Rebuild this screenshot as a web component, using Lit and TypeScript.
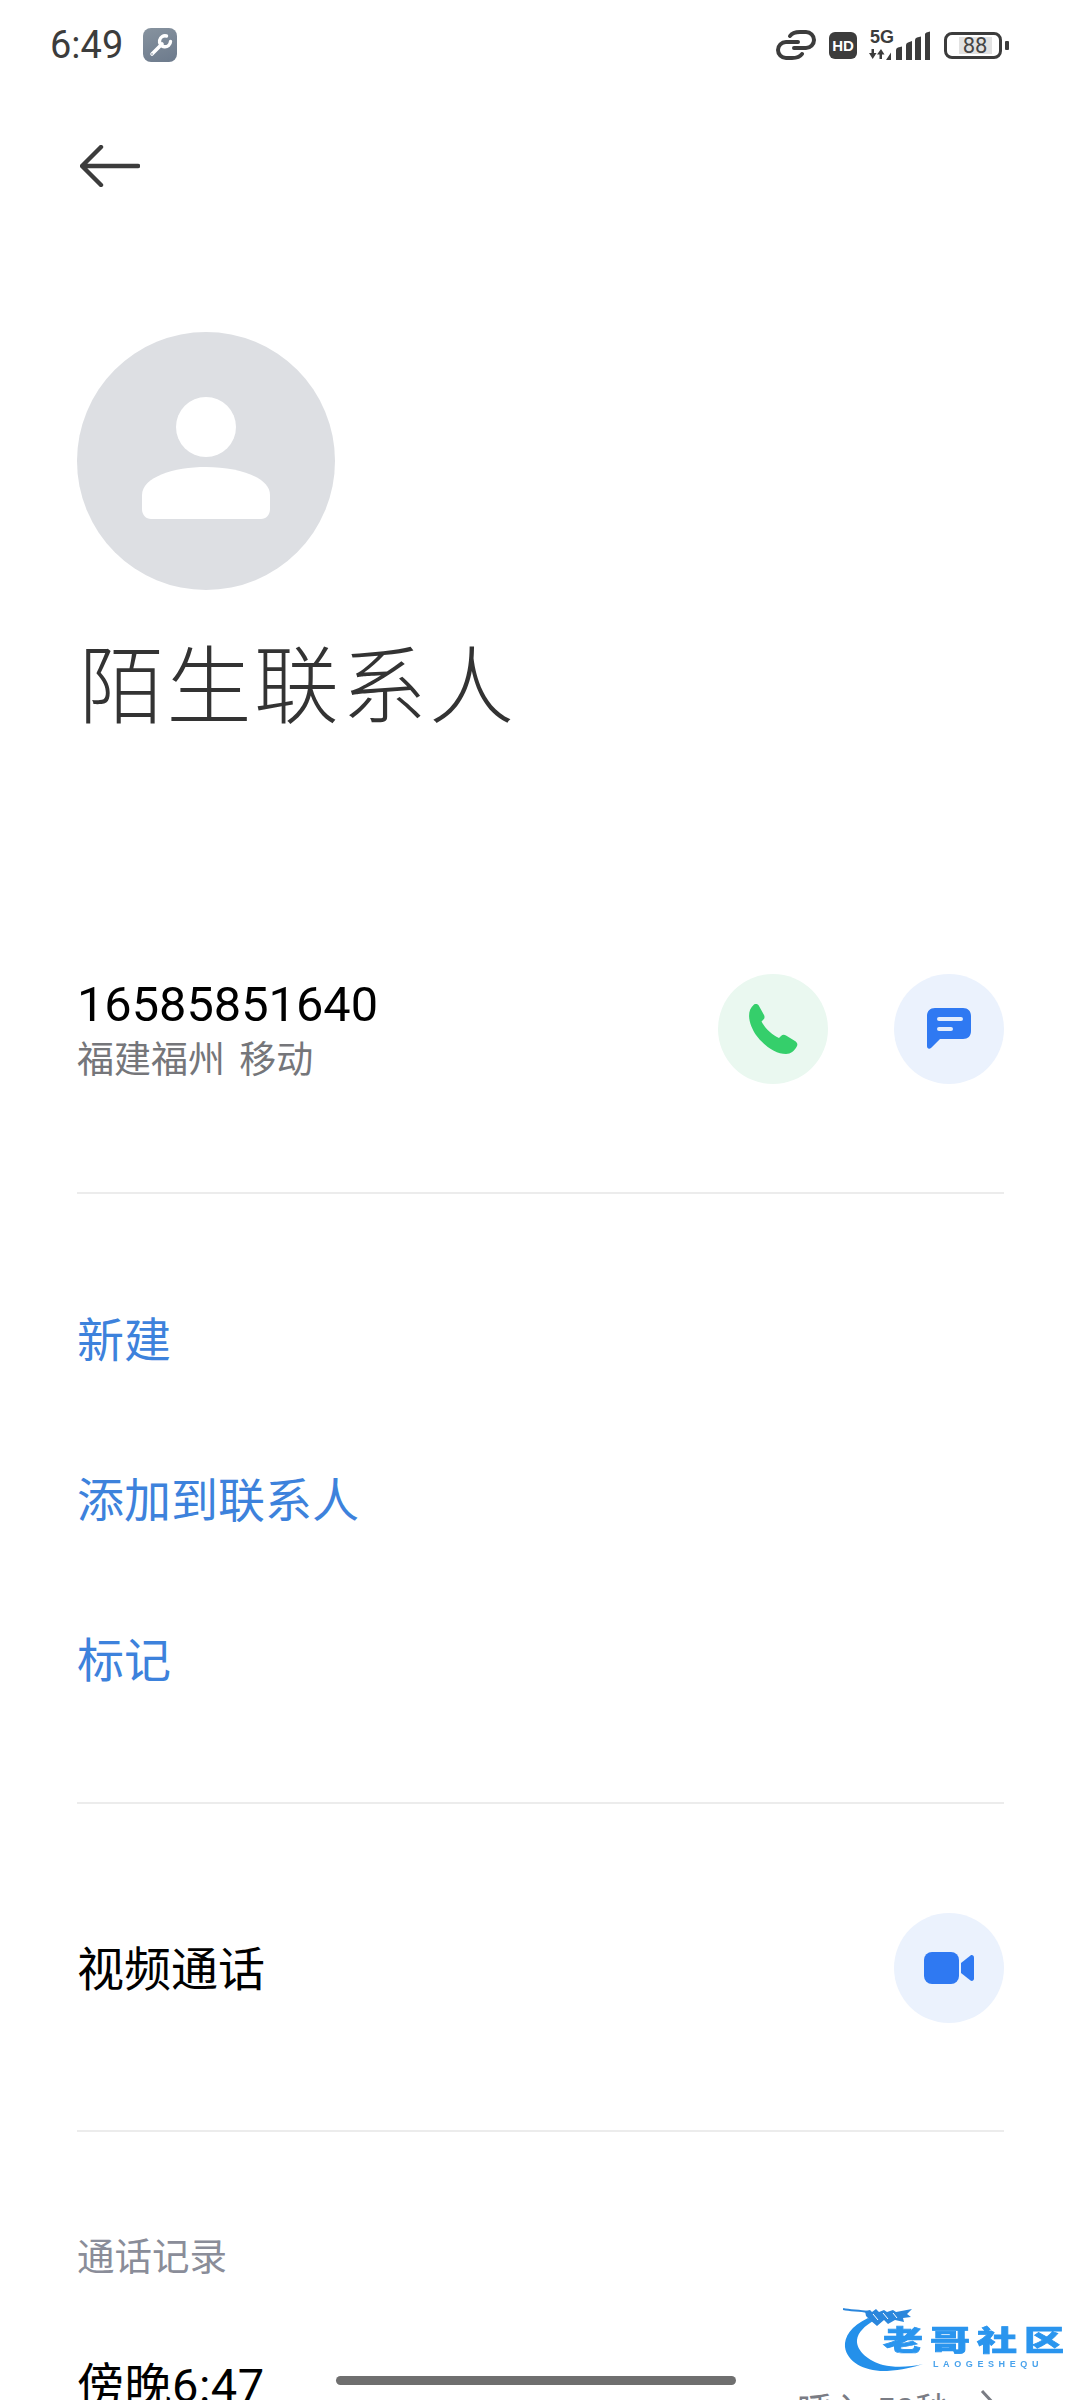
import { css, html, LitElement } from 'lit';
import { customElement } from 'lit/decorators.js';

@customElement('app-root')
export class AppRoot extends LitElement {
    static styles = css`
        :host {
            display: block;
            position: relative;
            width: 1080px;
            height: 2400px;
            overflow: hidden;
            background: #fff;
            color: #000;
            font-family: Roboto, "Noto Sans CJK SC", sans-serif;
        }

        svg {
            display: block;
            flex: none;
        }

        .status {
            height: 90px;
            padding: 0 70px 0 50px;
            display: flex;
            align-items: center;
            color: #3c3c3c;
        }
        .time {
            font-size: 38px;
            line-height: 90px;
            width: 93px;
        }
        .tool {
            width: 34px;
            height: 34px;
            border-radius: 8px;
            background: linear-gradient(160deg, #87939f, #6c7a8c);
        }
        .status-right {
            margin-left: auto;
            display: flex;
            align-items: center;
        }
        .hd {
            width: 28px;
            height: 27px;
            margin-left: 13px;
            border-radius: 6px;
            background: #3c3c3c;
            color: #fff;
            font: 700 15px/27px "Liberation Sans", sans-serif;
            text-align: center;
        }
        .net {
            position: relative;
            width: 61px;
            height: 30px;
            margin-left: 12px;
        }
        .net span {
            position: absolute;
            left: 1px;
            top: -1px;
            font: 700 18px/16px "Liberation Sans", sans-serif;
        }
        .battery {
            position: relative;
            width: 58px;
            height: 27px;
            margin: 0 8px 0 14px;
            box-sizing: border-box;
            border: 3px solid #3c3c3c;
            border-radius: 8px;
            display: flex;
            justify-content: center;
            align-items: center;
            padding-left: 4px;
        }
        .battery span {
            width: 33px;
            height: 17px;
            background: #e2e2e2;
            font-size: 22px;
            line-height: 17px;
            text-align: center;
            color: #444;
        }
        .battery::after {
            content: '';
            position: absolute;
            right: -10px;
            top: 6px;
            width: 4px;
            height: 9px;
            border-radius: 1px;
            background: #3c3c3c;
        }

        .back {
            height: 152px;
            padding-left: 80px;
            display: flex;
            align-items: center;
        }

        .content {
            padding: 0 76px 0 77px;
        }
        .avatar {
            margin-top: 90px;
            width: 258px;
            height: 258px;
            border-radius: 50%;
            background: #dddfe3;
            display: flex;
            align-items: center;
            justify-content: center;
        }
        .avatar svg {
            margin-bottom: 6px;
        }
        .name {
            margin-top: 46px;
            padding-left: 2px;
            font-size: 85px;
            font-weight: 300;
            line-height: 104px;
            letter-spacing: 2.5px;
            color: #333;
        }

        .contact {
            margin-top: 234px;
            display: flex;
            align-items: center;
        }
        .number {
            padding-top: 2px;
            font-size: 48.7px;
            line-height: 56px;
        }
        .place {
            margin-top: 5px;
            font-size: 37px;
            line-height: 46px;
            word-spacing: 5px;
            color: #75767a;
        }
        .actions {
            margin-left: auto;
            display: flex;
            gap: 66px;
        }
        .circle {
            width: 110px;
            height: 110px;
            border-radius: 50%;
            display: flex;
            align-items: center;
            justify-content: center;
            background: #ebf2fd;
        }
        .circle.green {
            background: #eaf8f0;
        }

        .rule {
            height: 2px;
            background: #ececec;
        }
        .rule.first {
            margin-top: 108px;
        }

        .links {
            padding: 65px 0 63px;
        }
        .links div {
            height: 160px;
            padding-bottom: 6px;
            box-sizing: border-box;
            display: flex;
            align-items: center;
            font-size: 47px;
            color: #3d82dc;
        }

        .video {
            margin: 109px 0 107px;
            display: flex;
            align-items: center;
            justify-content: space-between;
            font-size: 47px;
        }
        .video span {
            padding-bottom: 6px;
        }

        .log-title {
            margin-top: 100px;
            font-size: 37.5px;
            line-height: 50px;
            color: #8a8d99;
        }
        .log-row {
            margin-top: 72px;
            display: flex;
            justify-content: space-between;
            font-size: 47px;
            line-height: 64px;
        }
        .log-time {
            letter-spacing: 0.5px;
        }
        .log-detail {
            display: flex;
            align-items: flex-start;
            gap: 30px;
            margin-right: 8px;
            padding-top: 35px;
            font-size: 35px;
            line-height: 46px;
            color: #7a7c84;
        }

        .home-bar {
            position: absolute;
            left: 336px;
            top: 2376px;
            width: 400px;
            height: 9px;
            border-radius: 5px;
            background: #6f6f6f;
        }

        /* community logo stamped over the corner */
        .mark {
            position: absolute;
            left: 843px;
            top: 2304px;
            width: 225px;
            height: 72px;
            filter: blur(0.6px);
        }
        .mark svg {
            position: absolute;
            left: 0;
            top: 0;
        }
        .mark b {
            position: absolute;
            left: 40px;
            top: 23px;
            font-size: 40px;
            font-weight: 900;
            line-height: 40px;
            letter-spacing: 7px;
            white-space: nowrap;
            color: #2a95ee;
            -webkit-text-stroke: 1px #2a95ee;
            transform: scale(1, 0.72);
            transform-origin: 0 0;
        }
        .mark small {
            position: absolute;
            left: 90px;
            top: 55px;
            font: 700 9px/10px "Liberation Sans", sans-serif;
            letter-spacing: 4.6px;
            white-space: nowrap;
            color: #4aa3ec;
        }
    `;

    protected render() {
        return html`
            <div class="status">
                <div class="time">6:49</div>
                <div class="tool">
                    <svg width="34" height="34" viewBox="0 0 34 34" fill="none" stroke="#fff" stroke-linecap="round">
                        <path stroke-width="3.6" d="M9 26 19 16" />
                        <path stroke-width="3.4" d="M23.500 8A5.500 5.500 0 1 0 27.500 13.500" />
                        <circle cx="9" cy="26" r="0.8" fill="#7b8898" stroke="none" />
                    </svg>
                </div>
                <div class="status-right">
                    <svg width="40" height="30" viewBox="0 0 40 30" fill="none" stroke="#3c3c3c" stroke-width="4" stroke-linecap="round">
                        <path d="M14 6C16 3 20 2 24 2h6a8 8 0 0 1 0 16H18" />
                        <path d="M26 24c-2 3-6 4-10 4h-6a8 8 0 0 1 0-16h12" />
                    </svg>
                    <div class="hd">HD</div>
                    <div class="net">
                        <span>5G</span>
                        <svg width="61" height="30" viewBox="0 0 61 30" fill="#3c3c3c">
                            <path d="M0 23h2.500v-4h2.500v4h2.500L3.700 29zM8 24.500 12 19l3.500 5.500H13V29h-2.500v-4.500z" />
                            <path d="M17 30 22 22.600V30zM27 30V20q0-2 2-2.500l4-1V30zM37 30V15q0-2 2-2.500l4-1.500V30zM46 30V10q0-2 2-2.500l4-1V30zM56 30V4.500q0-1.500 1.500-2L61 1.600V30z" />
                        </svg>
                    </div>
                    <div class="battery"><span>88</span></div>
                </div>
            </div>

            <div class="back">
                <svg width="60" height="42" viewBox="0 0 60 42" fill="none" stroke="#3c3c3c" stroke-width="4.4" stroke-linecap="round" stroke-linejoin="round">
                    <path d="M58 21H3M21 2 2 21l19 19" />
                </svg>
            </div>

            <div class="content">
                <div class="avatar">
                    <svg width="130" height="122" viewBox="0 0 130 122" fill="#fff">
                        <circle cx="65" cy="30" r="30" />
                        <path d="M1 98c0-18 32-28 64-28s64 10 64 28v14c0 6-4 10-9 10H10c-5 0-9-4-9-10z" />
                    </svg>
                </div>
                <div class="name">陌生联系人</div>

                <div class="contact">
                    <div>
                        <div class="number">16585851640</div>
                        <div class="place">福建福州 移动</div>
                    </div>
                    <div class="actions">
                        <div class="circle green">
                            <svg width="50" height="50" viewBox="0 0 50 50" fill="#35cf6b">
                                <path d="M6 .5C8-.5 10 0 11 2l5 9c1 2 .5 4-1 5l-1.500 1.500C17 24 24 31 31 34l2-2c1.500-1.500 3.500-1.500 5-.5l9 5.500c2.500 1.500 3 4 1.500 6C46 47 43 50 38 50 28 50 16 42 8 31 2 22-3 8 6 .5z" />
                            </svg>
                        </div>
                        <div class="circle">
                            <svg width="44" height="42" viewBox="0 0 44 42">
                                <path fill="#2f79f2" d="M8 0h28c5 0 8 3 8 8v15c0 5-3 8-8 8H13L4 40c-2 1.500-4 .5-4-2V8c0-5 3-8 8-8z" />
                                <path fill="none" stroke="#e3edfc" stroke-width="4" stroke-linecap="round" d="M12 11h22M12 21h12" />
                            </svg>
                        </div>
                    </div>
                </div>
            </div>

            <div class="content">
                <div class="rule first"></div>
                <div class="links">
                    <div>新建</div>
                    <div>添加到联系人</div>
                    <div>标记</div>
                </div>
                <div class="rule"></div>

                <div class="video">
                    <span>视频通话</span>
                    <div class="circle">
                        <svg width="50" height="32" viewBox="0 0 50 32" fill="#2f79f2">
                            <rect width="35" height="32" rx="8" />
                            <path d="M37 11l9.500-7.500c1.500-1 3.500 0 3.500 2v21c0 2-2 3-3.500 2L37 21z" />
                        </svg>
                    </div>
                </div>
                <div class="rule"></div>

                <div class="log-title">通话记录</div>
                <div class="log-row">
                    <span class="log-time">傍晚6:47</span>
                    <div class="log-detail">
                        <span>呼入 50秒</span>
                        <svg width="16" height="30" viewBox="0 0 16 30" fill="none" stroke="#7a7c84" stroke-width="3">
                            <path d="M2 2l12 13L2 28" />
                        </svg>
                    </div>
                </div>
            </div>

            <div class="home-bar"></div>

            <div class="mark">
                <svg width="100" height="72" viewBox="0 0 100 72">
                    <path fill="#2490ea" d="M25 14C8 22 1 33 2 43c2 15 20 25 42 24 14-1 28-4 36-7-12 3-28 4-40 1C26 57 13 47 14 36c1-8 8-14 16-19z" />
                    <path fill="none" stroke="#2a86dc" stroke-width="2" d="M0 5c8 2 16 1 24 3" />
                    <path fill="#2a86dc" d="M22 7l5-1 2 2 4-3 3 3 5-2 3 2 6-2 3 2 16-3-5 5 4 3-8 1 1 4-9-2-7 4-4-4-7 6-7-6-4-4z" />
                    <path fill="none" stroke="#fff" stroke-width="1" d="M30 10l5 6M40 9l5 6M50 9l4 5" />
                </svg>
                <b>老哥社区</b>
                <small>LAOGESHEQU</small>
            </div>
        `;
    }
}
